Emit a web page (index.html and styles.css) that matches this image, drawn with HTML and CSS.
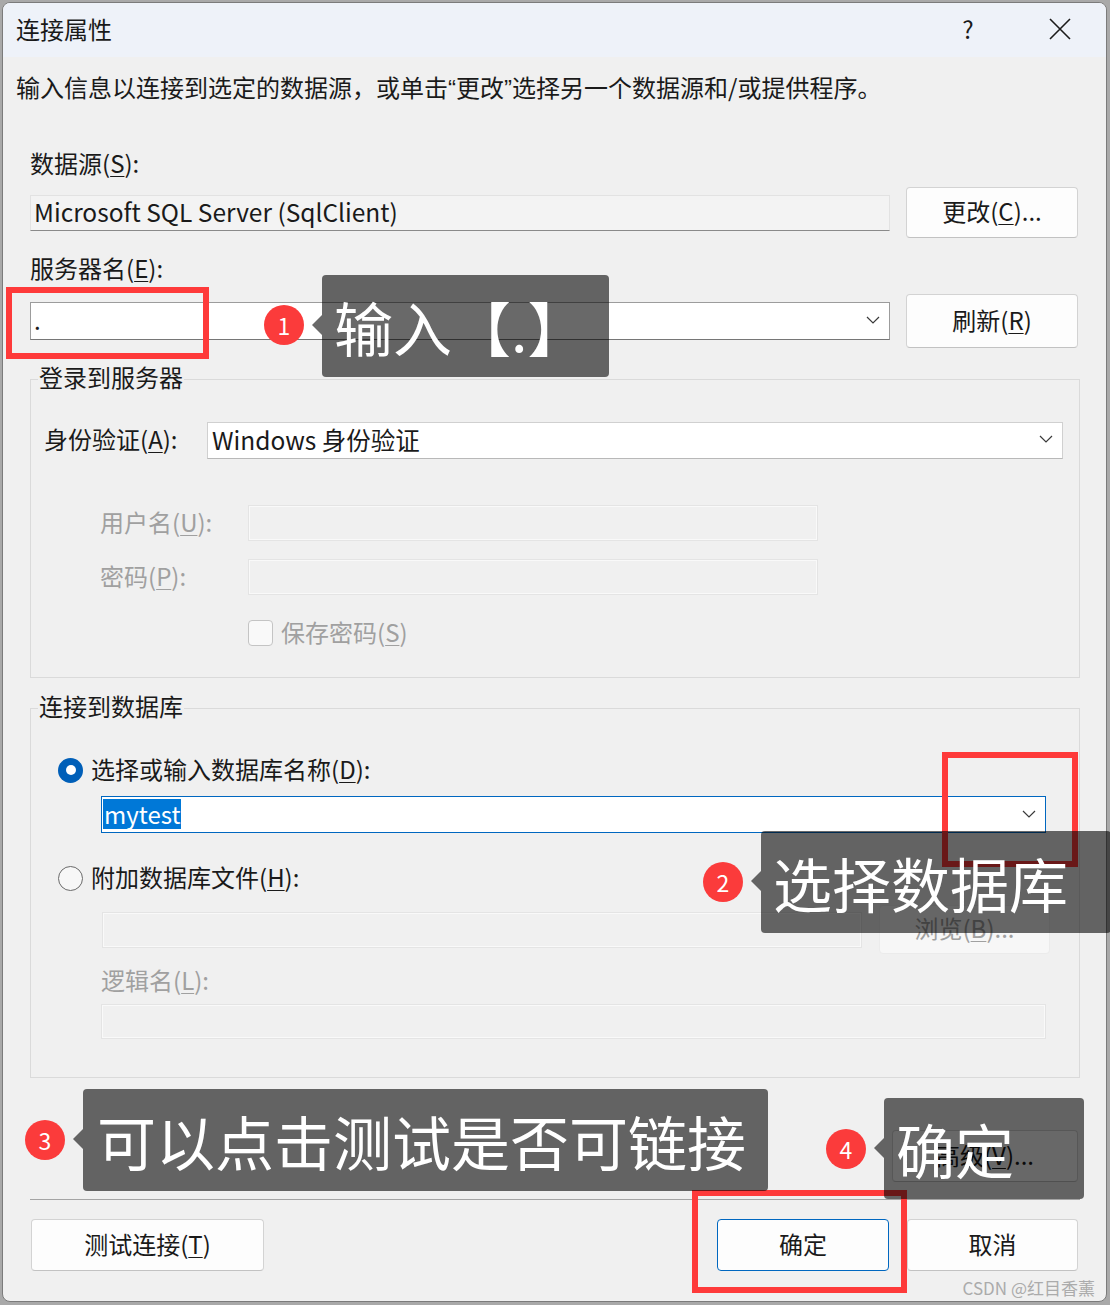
FILE: index.html
```html
<!DOCTYPE html>
<html lang="zh-CN">
<head>
    <meta charset="UTF-8">
    <title>连接属性</title>
    <link rel="stylesheet" href="styles.css">
</head>
<body>

    <div class="window">
        <!-- 标题栏 -->
        <div class="titlebar">
            <span class="title">连接属性</span>
            <span class="tb-help">?</span>
            <span class="tb-close">
                <svg width="22" height="22" viewBox="0 0 22 22"><path d="M1 1 L21 21 M21 1 L1 21" stroke="#1b1b1b" stroke-width="1.6" fill="none"/></svg>
            </span>
        </div>

        <div class="content">
            <p class="intro">输入信息以连接到选定的数据源，或单击<span class="q">“</span>更改<span class="q">”</span>选择另一个数据源和/或提供程序。</p>

            <label class="lbl lbl-ds">数据源(<u>S</u>):</label>
            <div class="row row-ds">
                <div class="field readonly">Microsoft SQL Server (SqlClient)</div>
                <button class="btn btn-side">更改(<u>C</u>)...</button>
            </div>

            <label class="lbl lbl-srv">服务器名(<u>E</u>):</label>
            <div class="row row-srv">
                <div class="combo combo-srv">
                    <span>.</span>
                    <svg class="chev" width="14" height="8" viewBox="0 0 14 8"><path d="M1 1 L7 7 L13 1" stroke="#3a3a3a" stroke-width="1.2" fill="none"/></svg>
                </div>
                <button class="btn btn-side btn-tall">刷新(<u>R</u>)</button>
            </div>

            <!-- 登录到服务器 -->
            <fieldset class="group group-login">
                <legend>登录到服务器</legend>
                <div class="auth-row">
                    <span>身份验证(<u>A</u>):</span>
                    <div class="combo combo-auth">
                        <span>Windows 身份验证</span>
                        <svg class="chev" width="14" height="8" viewBox="0 0 14 8"><path d="M1 1 L7 7 L13 1" stroke="#3a3a3a" stroke-width="1.2" fill="none"/></svg>
                    </div>
                </div>
                <div class="cred">
                    <span class="off">用户名(<u>U</u>):</span>
                    <div class="field disabled"></div>
                    <span class="off">密码(<u>P</u>):</span>
                    <div class="field disabled"></div>
                </div>
                <div class="check-row">
                    <span class="check"></span>
                    <span class="off">保存密码(<u>S</u>)</span>
                </div>
            </fieldset>

            <!-- 连接到数据库 -->
            <fieldset class="group group-db">
                <legend>连接到数据库</legend>
                <div class="radio-row radio-row-1">
                    <span class="radio on"></span>
                    <span>选择或输入数据库名称(<u>D</u>):</span>
                </div>
                <div class="combo combo-db">
                    <span class="sel">mytest</span>
                    <svg class="chev" width="14" height="8" viewBox="0 0 14 8"><path d="M1 1 L7 7 L13 1" stroke="#3a3a3a" stroke-width="1.2" fill="none"/></svg>
                </div>
                <div class="radio-row radio-row-2">
                    <span class="radio"></span>
                    <span>附加数据库文件(<u>H</u>):</span>
                </div>
                <div class="attach-row">
                    <div class="field disabled attach-field"></div>
                    <button class="btn btn-off">浏览(<u>B</u>)...</button>
                </div>
                <label class="lbl off lbl-logic">逻辑名(<u>L</u>):</label>
                <div class="field disabled logic-field"></div>
            </fieldset>

            <div class="adv-row">
                <button class="btn btn-adv">高级(<u>V</u>)...</button>
            </div>

            <div class="sep"></div>

            <div class="footer">
                <button class="btn btn-test">测试连接(<u>T</u>)</button>
                <button class="btn btn-ok">确定</button>
                <button class="btn btn-cancel">取消</button>
            </div>
        </div>

        <!-- 标注 -->
        <div class="mark mark-1"></div>
        <div class="mark mark-2"></div>
        <div class="mark mark-4"></div>

        <span class="badge badge-1">1</span>
        <div class="callout callout-1">输入【.】</div>

        <span class="badge badge-2">2</span>
        <div class="callout callout-2">选择数据库</div>

        <span class="badge badge-3">3</span>
        <div class="callout callout-3">可以点击测试是否可链接</div>

        <span class="badge badge-4">4</span>
        <div class="callout callout-4">确定</div>

        <span class="watermark">CSDN @红目香薰</span>
    </div>

</body>
</html>
```

FILE: styles.css
```css
/* 重置默认样式 */
* {
    margin: 0;
    padding: 0;
    box-sizing: border-box;
}

body {
    background: #a9a9a9;
    font-family: "Noto Sans CJK SC", sans-serif;
    font-size: 24px;
    color: #1a1a1a;
}

u {
    text-underline-offset: 3px;
    text-decoration-thickness: 1px;
}

button {
    font: inherit;
    color: inherit;
}

/* 窗口 */
.window {
    position: relative;
    width: 1105px;
    height: 1300px;
    margin: 2px 0 0 2px;
    background: #f0f0f0;
    border: 1px solid #7b7b7b;
    border-radius: 8px;
}

.titlebar {
    height: 54px;
    display: flex;
    align-items: center;
    padding: 0 0 3px 13px;
    background: #eef2f9;
    border-radius: 7px 7px 0 0;
}

.tb-help {
    margin-left: auto;
    width: 46px;
    text-align: center;
    margin-right: 23px;
}

.tb-close {
    width: 92px;
    display: flex;
    justify-content: center;
    align-items: center;
}

.content {
    padding: 0 28px 0 27px;
}

.intro {
    margin: 14px 0 0 -14px;
    line-height: 32px;
}

.intro .q {
    font-family: "Liberation Sans", sans-serif;
}

.lbl {
    display: block;
    line-height: 30px;
}

.lbl-ds {
    margin-top: 43px;
}

.lbl-srv {
    margin-top: 15px;
}

.row {
    display: flex;
    align-items: center;
    gap: 16px;
}

.row-ds {
    margin-top: 9px;
    height: 51px;
}

.row-srv {
    margin-top: 11px;
    height: 54px;
}

/* 输入框 */
.field {
    height: 36px;
    display: flex;
    align-items: center;
    padding: 0 0 3px 3px;
}

.readonly {
    width: 860px;
    background: #f3f3f3;
    border: 1px solid #e2e2e2;
    border-bottom: 1px solid #8a8a8a;
    font-size: 24.5px;
}

.disabled {
    background: #f0f0f0;
    border: 1px solid #e4e4e4;
    box-shadow: inset 0 0 0 1px #f9f9f9;
}

.combo {
    display: flex;
    align-items: center;
    padding: 0 0 3px 3px;
    background: #fff;
}

.combo .chev {
    margin-left: auto;
    margin-right: 9px;
}

.combo-srv {
    width: 860px;
    height: 38px;
    border: 1px solid #9c9c9c;
    border-bottom-color: #767676;
}

.combo-auth {
    height: 37px;
    padding-left: 4px;
    border: 1px solid #d0d0d0;
    border-bottom-color: #b8b8b8;
    font-size: 24.5px;
}

.combo-db {
    width: 945px;
    height: 37px;
    margin: 11px 0 0 57px;
    padding: 0 0 2px 1px;
    border: 1px solid #0067c0;
}

.sel {
    background: #0078d7;
    color: #fff;
    line-height: 30px;
    padding: 0 1px;
}

/* 按钮 */
.btn {
    background: #fdfdfd;
    border: 1px solid #d3d3d3;
    border-bottom-color: #c2c2c2;
    border-radius: 4px;
    padding-bottom: 4px;
    cursor: pointer;
}

.btn-side {
    width: 172px;
    height: 51px;
}

.btn-tall {
    height: 54px;
}

.btn-off {
    width: 171px;
    height: 49px;
    background: #f7f7f7;
    border-color: #ebebeb;
    color: #a0a0a0;
}

.off {
    color: #a0a0a0;
}

/* 分组 */
.group {
    border: 1px solid #dadada;
    margin-right: -2px;
    padding: 0 15px 0 13px;
}

.group legend {
    margin-left: -6px;
    padding: 0 1px 4px;
    line-height: 30px;
}

.group-login {
    margin-top: 14px;
    padding-bottom: 31px;
}

.auth-row {
    margin-top: 25px;
    display: grid;
    grid-template-columns: 163px 856px;
    align-items: center;
}

.auth-row > span {
    padding-bottom: 4px;
}

.cred {
    margin: 45px 0 0 56px;
    display: grid;
    grid-template-columns: 148px 570px;
    grid-auto-rows: 36px;
    row-gap: 18px;
    align-items: center;
}

.cred > span {
    padding-bottom: 4px;
}

.check-row {
    margin: 25px 0 0 204px;
    display: flex;
    align-items: center;
    gap: 8px;
    height: 26px;
}

.check-row > span.off {
    padding-bottom: 4px;
}

.check {
    width: 25px;
    height: 26px;
    border: 1px solid #c4c4c4;
    border-radius: 4px;
    background: #f9f9f9;
}

.group-db {
    margin-top: 13px;
    padding-bottom: 38px;
}

.radio-row {
    display: flex;
    align-items: center;
    gap: 8px;
    height: 30px;
    margin-left: 14px;
}

.radio-row > span:last-child {
    padding-bottom: 3px;
}

.radio-row-1 {
    margin-top: 30px;
}

.radio-row-2 {
    margin-top: 30px;
}

.radio {
    width: 25px;
    height: 25px;
    border-radius: 50%;
    border: 1.5px solid #6a6a6a;
    background: #f7f7f7;
}

.radio.on {
    border: none;
    background: #005fb8;
    display: flex;
    justify-content: center;
    align-items: center;
}

.radio.on::after {
    content: "";
    width: 10px;
    height: 10px;
    border-radius: 50%;
    background: #fff;
}

.attach-row {
    margin: 12px 0 0 58px;
    height: 49px;
    display: flex;
    align-items: center;
    gap: 17px;
}

.attach-field {
    width: 760px;
}

.lbl-logic {
    margin: 11px 0 0 57px;
}

.logic-field {
    width: 945px;
    height: 35px;
    margin: 9px 0 0 57px;
}

.adv-row {
    margin-top: 52px;
    display: flex;
    justify-content: flex-end;
}

.btn-adv {
    width: 186px;
    height: 52px;
}

.sep {
    margin: 17px -2px 0 0;
    height: 1px;
    background: #a4a4a4;
}

.footer {
    margin-top: 19px;
    display: flex;
    gap: 18px;
}

.footer .btn {
    height: 52px;
}

.btn-test {
    width: 233px;
    margin-left: 1px;
}

.btn-ok {
    width: 172px;
    margin-left: auto;
    border-color: #0067c0;
}

.btn-cancel {
    width: 171px;
}

/* 标注层 */
.mark {
    position: absolute;
    border: 6px solid #fe3a3a;
}

.mark-1 {
    left: 3px;
    top: 284px;
    width: 203px;
    height: 72px;
}

.mark-2 {
    left: 939px;
    top: 749px;
    width: 136px;
    height: 115px;
}

.mark-4 {
    left: 689px;
    top: 1187px;
    width: 215px;
    height: 103px;
}

.badge {
    position: absolute;
    width: 40px;
    height: 40px;
    border-radius: 50%;
    background: #fb3b3b;
    color: #fff;
    font-size: 23px;
    display: flex;
    justify-content: center;
    align-items: center;
}

.badge-1 { left: 261px; top: 302px; }
.badge-2 { left: 700px; top: 859px; }
.badge-3 { left: 22px; top: 1117px; }
.badge-4 { left: 823px; top: 1126px; }

.callout {
    position: absolute;
    height: 102px;
    padding-left: 12px;
    display: flex;
    align-items: center;
    background: rgba(0, 0, 0, 0.59);
    border-radius: 4px;
    color: #fff;
    font-size: 59px;
    white-space: nowrap;
}

.callout::before {
    content: "";
    position: absolute;
    left: -10px;
    top: 40px;
    border-top: 10px solid transparent;
    border-bottom: 10px solid transparent;
    border-right: 10px solid rgba(0, 0, 0, 0.59);
}

.callout-1 { left: 319px; top: 272px; width: 287px; }
.callout-2 { left: 758px; top: 828px; width: 350px; }
.callout-3 { left: 80px; top: 1086px; width: 685px; padding-left: 14px; }
.callout-4 { left: 881px; top: 1095px; width: 200px; height: 101px; }

.watermark {
    position: absolute;
    right: 11px;
    top: 1272px;
    font-size: 17px;
    color: #ababab;
}
```
